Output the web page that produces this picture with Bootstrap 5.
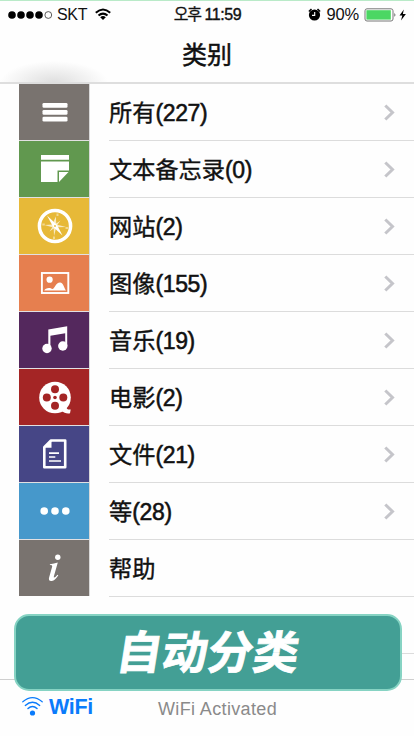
<!DOCTYPE html>
<html lang="zh-CN">
<head>
<meta charset="utf-8">
<meta name="viewport" content="width=device-width, initial-scale=1">
<title>类别</title>
<link href="https://cdn.jsdelivr.net/npm/bootstrap@5.3.0/dist/css/bootstrap.min.css" rel="stylesheet">
<style>
body{font-family:"Liberation Sans","Noto Sans CJK SC",sans-serif;color:#111;background:#fefefe}
svg{display:block;flex:none}
.phone{width:414px;height:736px;background:#fefefe}
.topbar{height:84px;border-top:1px solid #b9eac8;border-bottom:2px solid #dedede}
.topglow{left:0;top:58px;width:110px;height:25px;background:radial-gradient(ellipse 54px 22px at 54px 25px,#dedede,rgba(254,254,254,0))}
.status{height:27px;display:grid;grid-template-columns:1fr auto 1fr;padding:0 7px 0 8px}
.carrier{font-size:16px;line-height:26px;letter-spacing:-.3px}
.percent{font-size:16.5px;line-height:26px;letter-spacing:-.2px;margin:-1px 5px 0 6px}
.clock{font-family:"Liberation Sans","Noto Sans CJK KR",sans-serif;font-size:16px;line-height:27px;letter-spacing:-.45px;-webkit-text-stroke:.4px #111}
.clock .ko{letter-spacing:-1.3px;-webkit-text-stroke:.3px #111}
.page-title{font-size:25px;line-height:55px;font-weight:400;-webkit-text-stroke:.5px #111}
.cat{height:57px;padding-left:19px}
.tile{width:71px;height:57px;border-bottom:1px solid #e2e0e2;border-right:1px solid #d9d9d9;padding-left:1px}
.cat:nth-child(9) .tile{height:56px;border-bottom:0}
.cat-body{margin-left:19px;border-bottom:1px solid #dcdcdc;height:57px;padding-right:19px}
.cat-name{font-size:23.2px;line-height:56px;white-space:nowrap;padding-top:2px;-webkit-text-stroke:.4px #111}
.cat-name .num{font-size:23px;letter-spacing:-.35px;-webkit-text-stroke:.55px #111}
.c-gray{background:#79736f}.c-green{background:#61984f}.c-yellow{background:#e7b938}.c-orange{background:#e67f4f}
.c-purple{background:#54285d}.c-red{background:#a42525}.c-indigo{background:#464686}.c-blue{background:#4698cb}
.blank-row{height:57px;border-bottom:1px solid #dcdcdc;margin-left:109px}
.bottom{height:57px;border-top:1px solid #cfcfcf;margin-top:25px;padding-left:22px}
.wifi-label{font-size:21.5px;line-height:55px;font-weight:700;color:#0a7bfb;letter-spacing:-.3px;width:45px;margin-left:6px}
.wifi-state{font-size:18px;line-height:59px;color:#8a8a8a;margin-left:64px;letter-spacing:.36px}
.banner{left:14px;top:614px;width:388px;height:77px;border:2px solid #86d3c3;border-radius:15px;background:#439f95;color:#fff}
.banner span{font-family:"Noto Sans CJK SC",sans-serif;font-weight:700;font-size:45.5px;line-height:66px;transform:skewX(-9deg);-webkit-text-stroke:.8px #fff}
</style>
<script src="https://cdn.jsdelivr.net/npm/bootstrap@5.3.0/dist/js/bootstrap.bundle.min.js"></script>
</head>
<body>
<svg width="0" height="0" class="position-absolute"><defs>
<symbol id="chev" viewBox="0 0 12 18"><path d="M2.3 2.500 9.500 9.500 2.300 16.500" fill="none" stroke="#c5c5ca" stroke-width="3"/></symbol>
</defs></svg>
<main class="phone position-relative overflow-hidden">
<header class="topbar">
<div class="topglow position-absolute"></div>
<div class="status">
<div class="d-flex align-items-center">
<svg width="45" height="10" viewBox="0 0 45 10"><g fill="#000"><circle cx="4" cy="5" r="3.8"/><circle cx="13" cy="5" r="3.8"/><circle cx="22" cy="5" r="3.8"/><circle cx="31" cy="5" r="3.8"/></g><circle cx="40.3" cy="5" r="3.4" fill="none" stroke="#333" stroke-width=".8"/></svg>
<span class="carrier ms-1">SKT</span>
<svg class="ms-2" width="16" height="13" viewBox="0 0 16 13"><g fill="none" stroke="#000" stroke-width="2"><path d="M.8 4.8Q8-1.8 15.2 4.8M3.5 7.6Q8 3.6 12.5 7.6"/></g><path d="M5.2 9.2Q8 7 10.8 9.2L8 12Z"/></svg>
</div>
<div class="clock"><span class="ko">오후</span> 11:59</div>
<div class="d-flex align-items-center justify-content-end">
<svg width="13" height="13" viewBox="0 0 13 13"><circle cx="6.5" cy="7" r="5.6"/><path d="M.9 3.5 3.5 1M9.5 1l2.6 2.5" stroke="#000" stroke-width="1.6"/><path d="M6.7 4v3.4H4" fill="none" stroke="#fff" stroke-width="1.1"/></svg>
<span class="percent">90%</span>
<svg width="43" height="14" viewBox="0 0 43 14"><rect x="1" y=".8" width="28" height="12.2" rx="2" fill="#fff" stroke="#777"/><rect x="2.4" y="2.2" width="24.4" height="9.4" fill="#4bd763"/><path d="M30.5 4.7q1.8 2.2 0 4.4z" fill="#333"/><path d="M39.8 1.4 35.5 7.6h2.8L37 12.6l4.9-6.7h-3z"/></svg>
</div>
</div>
<h1 class="page-title text-center m-0">类别</h1>
</header>
<section>
<div class="cat d-flex"><div class="tile c-gray d-flex align-items-center justify-content-center"><svg width="26" height="20" viewBox="0 0 26 20" fill="#fff"><rect x=".5" y="1" width="25" height="4.8" rx="1.3"/><rect x=".5" y="7.9" width="25" height="4.8" rx="1.3"/><rect x=".5" y="14.8" width="25" height="4.8" rx="1.3"/></svg></div><div class="cat-body flex-grow-1 d-flex justify-content-between align-items-center"><span class="cat-name">所有<span class="num">(227)</span></span><svg width="12" height="18"><use href="#chev"/></svg></div></div>
<div class="cat d-flex"><div class="tile c-green d-flex align-items-center justify-content-center"><svg width="30" height="28" viewBox="0 0 30 28" fill="#fff"><path d="M1 0h28v4.8H1zM1 6.4h28v9H17.5V27H1zM19 16.9h9.5L19 27z"/></svg></div><div class="cat-body flex-grow-1 d-flex justify-content-between align-items-center"><span class="cat-name">文本备忘录<span class="num">(0)</span></span><svg width="12" height="18"><use href="#chev"/></svg></div></div>
<div class="cat d-flex"><div class="tile c-yellow d-flex align-items-center justify-content-center"><svg width="36" height="36" viewBox="0 0 36 36"><circle cx="18" cy="18" r="15.6" fill="none" stroke="#fff" stroke-width="3.5"/><g fill="#fff"><path d="M10 7.5 20 17 25.500 27.500 16.200 19z"/><path d="M18.800 8.500l.5 7 4.200-3-3.100 4.300L29 19l-8.600.3 2.600 3.900-4-2.800L17 28l-.3-7.400L12.500 23.500l2.800-4.300L7.500 17l7.800-.4z" opacity=".7"/><g opacity=".45"><path d="M19.500 5.500h2v2.500h-2zM16 28.500h2V31h-2zM5.300 15.500h2.500v2H5.300zM28.500 19h2.500v2h-2.500z"/></g></g><circle cx="18" cy="18" r=".9" fill="#e7b938"/></svg></div><div class="cat-body flex-grow-1 d-flex justify-content-between align-items-center"><span class="cat-name">网站<span class="num">(2)</span></span><svg width="12" height="18"><use href="#chev"/></svg></div></div>
<div class="cat d-flex"><div class="tile c-orange d-flex align-items-center justify-content-center"><svg width="30" height="22" viewBox="0 0 30 22"><rect x="1.9" y="1" width="26.4" height="20" fill="none" stroke="#fff" stroke-width="1.9"/><circle cx="9.6" cy="7.7" r="3.1" fill="#fff"/><path d="M4.2 18.5c1-2.8 6-3.4 8.2-1.4 2.2 0 3.300-6.600 7.600-6.600 3.600 0 4 5.700 6 8z" fill="#fff"/></svg></div><div class="cat-body flex-grow-1 d-flex justify-content-between align-items-center"><span class="cat-name">图像<span class="num">(155)</span></span><svg width="12" height="18"><use href="#chev"/></svg></div></div>
<div class="cat d-flex"><div class="tile c-purple d-flex align-items-center justify-content-center"><svg width="26" height="28" viewBox="0 0 26 28" fill="#fff"><path d="M6.3 3.6 25.2.3V20h-2V7.2L8.4 9.8V23H6.3z"/><circle cx="5" cy="22.5" r="4.7"/><circle cx="20.8" cy="20" r="4.7"/></svg></div><div class="cat-body flex-grow-1 d-flex justify-content-between align-items-center"><span class="cat-name">音乐<span class="num">(19)</span></span><svg width="12" height="18"><use href="#chev"/></svg></div></div>
<div class="cat d-flex"><div class="tile c-red d-flex align-items-center justify-content-center"><svg width="32" height="33" viewBox="0 0 32 33"><circle cx="16" cy="16.5" r="15.8" fill="#fff"/><path d="M22 29.5q3.5-1 5.5-3.2c0 2 1.5 2.4 4.2 2.2l-.7 3.7c-2.7.6-6-.2-9-2.7z" fill="#fff"/><g fill="#a42525"><circle cx="16" cy="8.2" r="4"/><circle cx="7.8" cy="16.5" r="4"/><circle cx="24.3" cy="16.5" r="4"/><circle cx="16" cy="24.7" r="4"/><circle cx="16" cy="16.5" r="1.8"/></g></svg></div><div class="cat-body flex-grow-1 d-flex justify-content-between align-items-center"><span class="cat-name">电影<span class="num">(2)</span></span><svg width="12" height="18"><use href="#chev"/></svg></div></div>
<div class="cat d-flex"><div class="tile c-indigo d-flex align-items-center justify-content-center"><svg width="26" height="30" viewBox="0 0 26 30"><path d="M9 1.5h14.2V28.3H2.3V8.2z" fill="none" stroke="#fff" stroke-width="2.6" stroke-linejoin="round"/><path d="M9.5 1v7.8H2z" fill="#fff"/><path d="M7 14.2h10M7 18h6.3M7 22h12" stroke="#fff" stroke-width="1.7"/></svg></div><div class="cat-body flex-grow-1 d-flex justify-content-between align-items-center"><span class="cat-name">文件<span class="num">(21)</span></span><svg width="12" height="18"><use href="#chev"/></svg></div></div>
<div class="cat d-flex"><div class="tile c-blue d-flex align-items-center justify-content-center"><svg width="30" height="8" viewBox="0 0 30 8" fill="#fff"><circle cx="4.2" cy="4" r="3.8"/><circle cx="15" cy="4" r="3.8"/><circle cx="25.8" cy="4" r="3.8"/></svg></div><div class="cat-body flex-grow-1 d-flex justify-content-between align-items-center"><span class="cat-name">等<span class="num">(28)</span></span><svg width="12" height="18"><use href="#chev"/></svg></div></div>
<div class="cat d-flex"><div class="tile c-gray d-flex align-items-center justify-content-center"><svg width="14" height="28" viewBox="0 0 14 28" fill="#fff"><circle cx="9.8" cy="3.3" r="2.7"/><path d="M2 10.2q4-.6 7.800-1.700L5.900 22.200c-.4 1.600.4 2.200 3.600-1.500l.8.6C7 26.200 5.200 27 3.200 27 .9 27 .6 25.300 1.100 23.500L4.200 12.500q.4-1.500-2.400-1.400z"/></svg></div><div class="cat-body flex-grow-1 d-flex align-items-center"><span class="cat-name">帮助</span></div></div>
<div class="blank-row"></div>
</section>
<footer class="bottom d-flex">
<svg class="mt-3" width="21" height="21" viewBox="0 0 21 21"><g fill="none" stroke="#0a7bfb" stroke-linecap="round"><path d="M.8 5.8Q10.5-2.4 20.2 5.8" stroke-width="1.2"/><path d="M3.3 9.4Q10.5 3 17.7 9.4" stroke-width="1.4"/><path d="M6 12.5Q10.5 8.6 15 12.5" stroke-width="1.5"/></g><circle cx="10.5" cy="17" r="2.6" fill="#0a7bfb"/></svg>
<span class="wifi-label">WiFi</span>
<span class="wifi-state">WiFi Activated</span>
</footer>
<div class="banner position-absolute d-flex justify-content-center"><span>自动分类</span></div>
</main>
</body>
</html>
